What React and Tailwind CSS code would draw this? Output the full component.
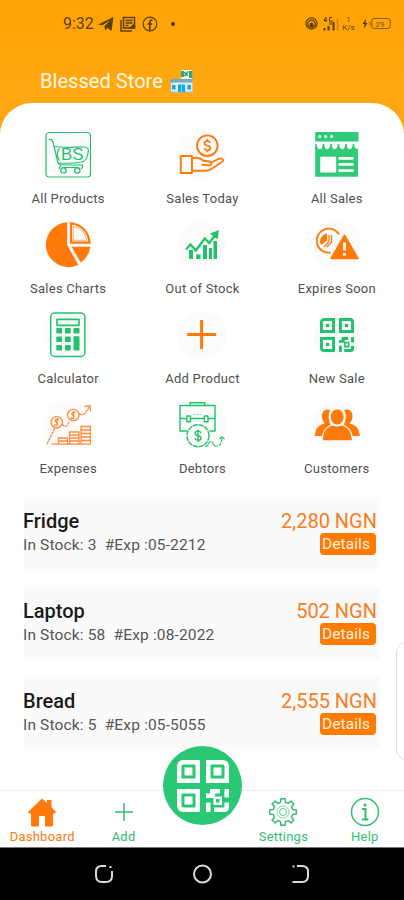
import React from 'react';

const ORANGE = '#ff7a0a';
const GREEN = '#22c26c';

const Svg = ({ children, color, width = 1.5 }) => (
  <svg className="w-12 h-12" viewBox="0 0 48 48" fill="none" stroke={color} strokeWidth={width} strokeLinejoin="round">
    {children}
  </svg>
);

const ProductsIcon = () => (
  <Svg color={GREEN} width="1.2">
    <rect x="2" y="1.5" width="44.5" height="44.5" rx="3" />
    <path d="M4.500 8.500c2.500-.4 4 .5 4.500 2.500L13.500 30c.6 2.600 2 4 4.500 4H39M10.500 15.500c8 1.500 22 .5 30 .5 3.500 0 4.500 2.500 3.500 6.500-1 5.500-3 8.500-7 8.500-7 1.500-14 1.500-21.500 1" />
    <path d="M15.500 17.500c-3 3-3 8 0 12M17 35c-1.500 1-2 2-1.500 3M38 34c1 1.500.5 3-1 4M18 36.500h17" />
    <circle cx="19.500" cy="39.500" r="2.700" />
    <circle cx="33.300" cy="39.500" r="2.700" />
    <text x="17" y="29" fontSize="17" fontFamily="Liberation Sans, sans-serif" textLength="22.500" lengthAdjust="spacingAndGlyphs" stroke="none" fill={GREEN}>BS</text>
  </Svg>
);

const HandCoinIcon = () => (
  <Svg color={ORANGE} width="1.900">
    <circle cx="29.300" cy="14.700" r="10.300" />
    <path d="M32.300 11.800c-.6-1.200-1.600-1.700-3-1.700-1.700 0-2.900.8-2.900 2.200 0 3.100 6 1.500 6 4.700 0 1.500-1.300 2.300-3 2.300-1.600 0-2.700-.7-3.200-2M29.300 8v2M29.300 19.300v2" strokeWidth="1.800" />
    <rect x="2.800" y="25" width="11.200" height="17" />
    <path d="M14 27.500c5-1.700 8-1 11.500 2.200l6 .8c2.500.4 2.500 3.800 0 3.900l-8-.7M33 31.500l8.500-3.800c3-1.200 4.800 1.800 2.500 3.300L32.500 38.500c-1.500 1-3 1.200-5 1.200H14" />
  </Svg>
);

const StoreIcon = () => (
  <Svg color="none">
    <path fill="#2fcb78" d="M2.200 1h43.300v9.500H2.200zM2.200 13h1.500c0 7 6 7 6 0h1.500c0 7 6 7 6 0h1.500c0 7 6 7 6 0h1.500c0 7 6 7 6 0h1.500c0 7 6 7 6 0h1.500c0 4 1.800 5 3.800 5v27.700H2.200z" />
    <g fill="#fff">
      <circle cx="6.800" cy="5.500" r="1.500" />
      <circle cx="12.700" cy="5.500" r="1.500" />
      <circle cx="18.600" cy="5.500" r="1.500" />
      <rect x="7.200" y="25.800" width="16" height="15.700" rx="1" />
      <rect x="25.300" y="26" width="15.500" height="2.800" rx="1" />
      <rect x="25.300" y="32" width="15.500" height="2.800" rx="1" />
      <rect x="25.300" y="38.300" width="15.500" height="2.800" rx="1" />
    </g>
  </Svg>
);

const PieIcon = () => (
  <Svg color="none">
    <path fill={ORANGE} d="M23.200 1.200V24l11.200 20A22.800 22.500 0 1 1 23.200 1.200z" />
    <path fill={ORANGE} d="M27.500 25.800H46.200a22 22 0 0 1-9.500 15.700z" />
    <path stroke={ORANGE} strokeWidth="2.200" strokeLinejoin="miter" d="M27 2.300C37.200 3.300 44.500 11 45.500 21.700H27z" />
    <path stroke={ORANGE} strokeWidth=".6" d="M29.300 5.500C37 7 41.500 12 42.500 19.300H29.300z" />
  </Svg>
);

const GrowthIcon = () => (
  <Svg color={GREEN} width="2.400">
    <path d="M8 28.500l4.500-5 5.300 6 8.900-12 4.500 4.500L38 13" strokeLinejoin="miter" />
    <path d="M32 12.500L41 9l-1.500 9.500z" fill={GREEN} stroke="none" />
    <g fill={GREEN} stroke="none">
      <rect x="11" y="29" width="4" height="9" />
      <rect x="18.200" y="33.500" width="4.300" height="4.500" />
      <rect x="25" y="24" width="4" height="14" />
      <rect x="31" y="27" width="3" height="11" />
      <rect x="35.500" y="20" width="3.500" height="18" />
    </g>
  </Svg>
);

const ExpireIcon = () => (
  <Svg color={ORANGE} width="1.900">
    <path d="M26 13.500a12 12 0 1 0-8.500 18" />
    <path d="M16 14v6.500l-5 5.500M18.500 14v7l-4.500 5" strokeWidth="1.300" />
    <path d="M14 12.500a8 8 0 0 0-6 11.500l6-4.500z" fill={ORANGE} stroke="none" />
    <path d="M31.500 14.500l13.200 22.800H18.400z" fill={ORANGE} strokeWidth="2" />
    <path d="M31.500 21.500v8M31.500 32v2.500" stroke="#fff" strokeWidth="2.800" />
  </Svg>
);

const CalcIcon = () => (
  <Svg color={GREEN}>
    <rect x="6.700" y="2" width="34.200" height="43.500" rx="4" />
    <rect x="13" y="8.300" width="22" height="6" strokeWidth="1.700" />
    <g fill={GREEN} stroke="none">
      {[17, 25.500, 34].map((y) => (
        <React.Fragment key={y}>
          <rect x="12.300" y={y} width="5.700" height="5.500" rx=".7" />
          <rect x="21" y={y} width="5.700" height="5.500" rx=".7" />
        </React.Fragment>
      ))}
      <rect x="29.500" y="17" width="6" height="5.500" rx=".7" />
      <rect x="29.500" y="25.300" width="6" height="14.300" rx=".7" />
    </g>
  </Svg>
);

const PlusIcon = () => (
  <Svg color={ORANGE} width="3">
    <path d="M23.600 9v29M9.200 23.500h29" />
  </Svg>
);

const Qr = ({ className, color, dot = 8 }) => (
  <svg className={className} viewBox="0 0 52 52" fill="none" stroke={color} strokeWidth="4.500">
    <path d="M6.250 2.250h14.500v18.500H2.250V6.250a4 4 0 0 1 4-4z" />
    <path d="M45.750 2.250h-14.500v18.500h18.500V6.250a4 4 0 0 0-4-4z" />
    <path d="M6.250 49.750h14.500v-18.500H2.250v14.500a4 4 0 0 0 4 4z" />
    <g fill={color} stroke="none">
      <rect x={11.500 - dot / 2} y={11.500 - dot / 2} width={dot} height={dot} />
      <rect x={40.500 - dot / 2} y={11.500 - dot / 2} width={dot} height={dot} />
      <rect x={11.500 - dot / 2} y={40.500 - dot / 2} width={dot} height={dot} />
      <path d="M33 29h10v4.500h-5V38h-9v-4.500h4zM47.500 29H52v8.500h-4.500zM29 42.500h4.500V52H29zM47.500 42.500H52V47q0 5-5 5H37v-4.500h10.500z" />
      <path fillRule="evenodd" d="M36.500 36.500h8.500v8.500h-8.500zM39 39v3.500h3.500V39z" />
    </g>
  </svg>
);

const ExpensesIcon = () => (
  <Svg color="#ff8a3c" width="1.300">
    <path d="M3 43l8-16M18.500 23c2 4 5 3.500 6.500-3M35 13c6 2 7-2 10.500-7.500" strokeDasharray="3 .6" />
    <path d="M40.500 5.500l5.500-.8.400 5.500" />
    <circle cx="12.700" cy="21.300" r="5.700" />
    <circle cx="29.300" cy="14" r="5.700" />
    <path d="M15 19c-2-2-5 0-3 2s2.500 4-2 3M13 17v8.500M31.500 12c-2-2-5 0-3 2s2.500 4-2 3M29.500 10v8" />
    <path d="M7.500 43.200h39M14.500 43v-6h9v6M14.500 40h9M25.500 43V31h9.500v12M25.500 34h9.500M25.500 37h9.500M25.500 40h9.500M37 43V25.500h9.300V43M37 29h9.300M37 32.500h9.300M37 36h9.300M37 39.500h9.300" />
  </Svg>
);

const DebtorsIcon = () => (
  <Svg color={GREEN} width="1.400">
    <path d="M12 4.500V1.700h14.700v2.800M9 30H2V4.500h35V30h-5.500M2 17.500h7M12.500 17.500h13.500M30 17.500h7" />
    <rect x="8.800" y="15" width="3.700" height="5.700" />
    <rect x="26.300" y="15" width="3.700" height="5.700" />
    <path d="M15.500 13.300h8" strokeDasharray="2 1" strokeWidth=".6" />
    <circle cx="20" cy="34.700" r="11" strokeDasharray="5 .8" />
    <path d="M23 32c-.6-1.300-1.600-1.900-3-1.900-1.700 0-2.900.8-2.900 2.200 0 3.100 6 1.500 6 4.700 0 1.500-1.300 2.300-3 2.300-1.600 0-2.700-.7-3.200-2M20 28.500V41" />
    <path d="M27 45c5 1 2-4 5.500-4.500s1.500 4.500 5 4.500 6-1 6.500-8M41.500 38l2.500-2.500 2.500 2.500" strokeDasharray="4 .6" strokeWidth="1.200" />
  </Svg>
);

const CustomersIcon = () => (
  <Svg color="none">
    <g fill={ORANGE}>
      <path d="M17.500 9c-5-2-9 1.500-8.500 7 .2 3 1.500 5 3 6.300-4 1.700-7.500 2.800-9 7L1.500 35h7.300c1-5 4-9 9-11.500-2.500-4-3-10.500-.3-14.500z" />
      <path d="M31 9c5-2 9 1.500 8.500 7-.2 3-1.500 5-3 6.300 4 1.700 7.500 2.800 9 7L47 35h-7.300c-1-5-4-9-9-11.500 2.500-4 3-10.500.3-14.500z" />
      <ellipse cx="24.200" cy="16" rx="6.900" ry="8" stroke="#fafafa" strokeWidth=".8" />
      <path d="M19.500 24.500c3 1.300 6.500 1.300 9.500 0 6 2 9 5 9.900 14.800H9.700c.6-9.800 3.800-12.800 9.800-14.800z" />
    </g>
  </Svg>
);

const tiles = [
  { label: 'All Products', Icon: ProductsIcon },
  { label: 'Sales Today', Icon: HandCoinIcon },
  { label: 'All Sales', Icon: StoreIcon },
  { label: 'Sales Charts', Icon: PieIcon },
  { label: 'Out of Stock', Icon: GrowthIcon },
  { label: 'Expires Soon', Icon: ExpireIcon },
  { label: 'Calculator', Icon: CalcIcon },
  { label: 'Add Product', Icon: PlusIcon },
  { label: 'New Sale', Icon: () => <Qr className="w-[34px] h-[34px]" color={GREEN} dot={5} /> },
  { label: 'Expenses', Icon: ExpensesIcon },
  { label: 'Debtors', Icon: DebtorsIcon },
  { label: 'Customers', Icon: CustomersIcon },
];

const products = [
  { name: 'Fridge', stock: 3, exp: '05-2212', price: '2,280' },
  { name: 'Laptop', stock: 58, exp: '08-2022', price: '502' },
  { name: 'Bread', stock: 5, exp: '05-5055', price: '2,555' },
];

const StatusBar = () => (
  <div className="flex h-[47px] items-center justify-between pl-[63px] pr-[13px] text-[#5c3f05]">
    <div className="flex items-center">
      <span className="text-[16px] leading-none w-[35px]">9:32</span>
      <svg className="w-4 h-4" viewBox="0 0 16 16" fill="currentColor">
        <path d="M0 8.500L15.500 1l-2 14-4-3-2.500 2.500-.5-4.500 6-6-8 5.300z" />
      </svg>
      <svg className="ml-[6px] w-4 h-4" viewBox="0 0 16 16" fill="none" stroke="currentColor" strokeWidth="1.500">
        <rect x="3.500" y="1.500" width="11" height="10.500" />
        <path d="M1 4v11h11M5.500 4.500h7M5.500 7h7M5.500 9.500h3" />
        <path d="M10 12l4.500-4v4z" fill="currentColor" />
      </svg>
      <svg className="ml-[6px] w-4 h-4" viewBox="0 0 16 16" fill="none" stroke="currentColor" strokeWidth="1.200">
        <circle cx="8" cy="8" r="6.800" />
        <path d="M10.500 4.300c-2-.4-2.700.4-2.700 2V14M5.500 8h4.700" strokeWidth="1.700" />
      </svg>
      <span className="ml-[13px] w-1 h-1 rounded-full bg-[#4a3200]" />
    </div>
    <div className="flex items-center">
      <svg className="w-[13px] h-[13px]" viewBox="0 0 14 14" fill="none" stroke="currentColor" strokeWidth="1.300">
        <circle cx="7" cy="7" r="6" />
        <path d="M4.500 10.500a4 4 0 1 1 5 0" />
        <path d="M5.500 11V8a1.500 1.500 0 0 1 3 0v3z" fill="currentColor" />
      </svg>
      <svg className="ml-[5px] w-4 h-4" viewBox="0 0 16 16" fill="none" stroke="currentColor" strokeWidth="1.500">
        <path d="M1.500 12v2.500M5.500 10v4.500M10.500 6v8.500" strokeWidth="2" />
        <path d="M14.500 3v11.500" strokeOpacity=".3" />
        <path d="M3 1L1 4.500h3M3 1v5M9 1.500H6.500V6H9V4M6 8h3" strokeWidth="1" />
      </svg>
      <div className="ml-[2px] flex w-[15px] flex-col items-center text-[8px] leading-[8px]">
        <span>1</span>
        <span>K/s</span>
      </div>
      <svg className="ml-[6px] w-[29px] h-[13px]" viewBox="0 0 29 13" fill="none" stroke="currentColor">
        <path d="M4 1.500L.5 7h2l-.5 4.500L5.500 6h-2z" fill="currentColor" stroke="none" />
        <path d="M8 4.500v4" strokeOpacity=".6" />
        <rect x="9.700" y="1.500" width="18.500" height="10" rx="2.500" strokeOpacity=".75" />
        <text x="13.500" y="9.500" fontSize="8" fill="currentColor" stroke="none" opacity=".75">29</text>
      </svg>
    </div>
  </div>
);

const StoreEmoji = () => (
  <svg className="ml-[7px] w-[23px] h-[23px]" viewBox="0 0 23 23">
    <rect x="11" width="11.500" height="9" rx="1" fill="#e9f8e8" />
    <path d="M11 1h3v6h-3zM19 1h3.500v7H19z" fill="#3aa573" />
    <path d="M14 2l4 4M18 1.500L14.500 6" stroke="#2d9c66" strokeWidth="1.300" />
    <rect x="1" y="11" width="21.500" height="11.500" fill="#d7eef8" />
    <path d="M0 9h22.500v3.500H0z" fill="#78a9c4" />
    <path d="M2 15h3.500v4.500H2zM17.500 15H21v4.500h-3.500zM8 14.500h7v8H8z" fill="#18a8e8" />
    <path d="M11.500 14.500v8" stroke="#77d0f4" />
    <path d="M0 22.200h22.500" stroke="#b3a78d" />
  </svg>
);

const ProductRow = ({ product }) => (
  <div className="flex h-[72px] justify-between bg-[#fafafa] pt-[12px] pr-[3px]">
    <div className="-ml-px">
      <div className="text-[20px] font-medium leading-[24px] text-[#1b1b1b]">{product.name}</div>
      <div className="text-[15.5px] leading-[24px] tracking-[0.16px] whitespace-pre text-[#555]">
        {`In Stock: ${product.stock}  #Exp :${product.exp}`}
      </div>
    </div>
    <div className="flex flex-col items-end">
      <div className="text-[20px] leading-[24px] text-[#fb7c1e]">{product.price} NGN</div>
      <button className="mr-px h-[22px] w-[56px] rounded-[4px] bg-[#ff7a00] pr-[4px] text-[15.5px] leading-[22px] tracking-[0.1px] text-[#fff3e4]">
        Details
      </button>
    </div>
  </div>
);

const NavItem = ({ label, className = '', children }) => (
  <div className={`flex flex-col items-center pt-[6px] ${className}`}>
    <svg className="w-[30px] h-[30px]" viewBox="0 0 30 30" fill="none" stroke="currentColor" strokeWidth="1.500">
      {children}
    </svg>
    <span className="mt-px text-[13px] leading-[18px] tracking-[0.25px]">{label}</span>
  </div>
);

// eight-toothed outline for the settings gear
const gear = Array.from({ length: 8 }, (_, i) => {
  const at = (r, deg) => {
    const a = ((i * 45 + deg - 90) * Math.PI) / 180;
    return `${(15 + r * Math.cos(a)).toFixed(2)} ${(15 + r * Math.sin(a)).toFixed(2)}`;
  };
  return `${i ? 'L' : 'M'}${at(10, -14)}L${at(13.5, -9)}L${at(13.5, 9)}L${at(10, 14)}`;
}).join('') + 'z';

const BottomNav = () => (
  <nav className="relative grid h-[57px] grid-cols-5 border-t border-[#eeeeee] bg-white pl-[2px] text-[#35bd73]">
    <NavItem label="Dashboard" className="text-[#ff7a0a]">
      <path d="M15 1.500l5 4.500V3h4.500v7l4.500 5-1.500 1.500H26v11.500q0 1.500-1.500 1.500H18V19h-6v10.500H5.500Q4 29.500 4 28V16.500H2.500L1 15z" fill="currentColor" stroke="none" />
    </NavItem>
    <NavItem label="Add" className="pl-[2px]">
      <path d="M15 6v18M6 15h18" />
    </NavItem>
    <div />
    <NavItem label="Settings">
      <path d={gear} strokeLinejoin="round" />
      <circle cx="15" cy="15" r="6" strokeWidth="1" strokeOpacity=".6" />
      <circle cx="15" cy="15" r="3.500" strokeWidth="1" strokeOpacity=".8" />
    </NavItem>
    <NavItem label="Help" className="pl-[2px]">
      <circle cx="15" cy="15" r="13.500" />
      <path d="M12 12h3.500v10M12 22.500h6.500" strokeWidth="2" />
      <circle cx="15" cy="8" r="1.600" fill="currentColor" stroke="none" />
    </NavItem>
    <button className="absolute left-[163px] top-[-45px] flex h-[79px] w-[79px] items-center justify-center rounded-full bg-[#2ac875]">
      <Qr className="w-[52px] h-[52px]" color="#fff" />
    </button>
  </nav>
);

const SystemKeys = () => (
  <div className="flex h-[53px] items-center justify-between border-t border-[#777] bg-black px-[93px] text-[#dcdcdc]">
    <svg className="w-[22px] h-[22px]" viewBox="0 0 22 22" fill="none" stroke="currentColor" strokeWidth="2">
      <path d="M13 3H9C5 3 3 5 3 8.500v4C3 17 5 19 9 19h4c4 0 6-2 6-6V8M16.500 4h2" />
    </svg>
    <svg className="w-[22px] h-[22px]" viewBox="0 0 22 22" fill="none" stroke="currentColor" strokeWidth="2">
      <circle cx="11.500" cy="11" r="8.500" />
    </svg>
    <svg className="w-[22px] h-[22px]" viewBox="0 0 22 22" fill="none" stroke="currentColor" strokeWidth="2">
      <path d="M8 3H13c4 0 6 2 6 5.500v4.500c0 4-2 6-6 6H3.500M3.500 3.500h2" />
    </svg>
  </div>
);

export default function App() {
  return (
    <div className="relative flex h-[900px] w-[404px] flex-col overflow-hidden bg-[#ffa813] font-['Roboto',sans-serif]">
      <header className="h-[103px] shrink-0 bg-linear-to-b from-[#ffa303] to-[#ffa813]">
        <StatusBar />
        <div className="flex items-center pl-[40px] pt-[22px]">
          <h1 className="text-[20px] leading-[24px] tracking-[0.05px] text-[#fff8e6]">Blessed Store</h1>
          <StoreEmoji />
        </div>
      </header>

      <main className="flex-1 rounded-t-[32px] bg-white pt-[28px]">
        <div className="grid grid-cols-3 pl-px">
          {tiles.map(({ label, Icon }) => (
            <div key={label} className="flex h-[90px] flex-col items-center">
              <div className="flex h-12 w-12 items-center justify-center rounded-full bg-[#fbfbfb]">
                <Icon />
              </div>
              <span className="mt-[10px] text-[13px] leading-[20px] tracking-[0.25px] text-[#505050]">{label}</span>
            </div>
          ))}
        </div>

        <div className="mt-[6px] flex flex-col gap-[18px] pl-[24px] pr-[24px]">
          {products.map((p) => (
            <ProductRow key={p.name} product={p} />
          ))}
        </div>
      </main>

      {/* edge panel peeking in from the right */}
      <div className="absolute right-[-24px] top-[641px] h-[120px] w-[32px] rounded-[12px] border border-[#dedede] bg-white" />

      <BottomNav />
      <SystemKeys />
    </div>
  );
}
